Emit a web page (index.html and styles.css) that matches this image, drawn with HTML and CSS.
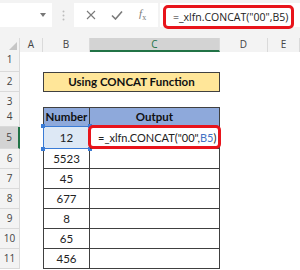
FILE: index.html
```html
<!DOCTYPE html>
<html>
<head>
<meta charset="utf-8">
<link rel="stylesheet" href="styles.css">
</head>
<body>
<div class="topbar">
    <div class="namebox">
        <svg class="arrow" width="6" height="4" viewBox="0 0 6 4"><path d="M0 0 L6 0 L3 4 Z" fill="#777777"/></svg>
    </div>
    <div class="dots">
        <svg width="3" height="11" viewBox="0 0 3 11"><circle cx="1.5" cy="1.5" r="1" fill="#bcbcbc"/><circle cx="1.5" cy="5.5" r="1" fill="#bcbcbc"/><circle cx="1.5" cy="9.5" r="1" fill="#bcbcbc"/></svg>
    </div>
    <div class="fxbox">
        <svg width="10" height="10" viewBox="0 0 10 10"><path d="M1 1 L9 9 M9 1 L1 9" stroke="#7a7a7a" stroke-width="1.1" fill="none"/></svg>
        <svg width="12" height="10" viewBox="0 0 12 10"><path d="M1 5.5 L4.5 9 L11 1.5" stroke="#7a7a7a" stroke-width="1.6" fill="none"/></svg>
        <span class="fx"><i>f</i><sub>x</sub></span>
    </div>
    <div class="formula">
        <div class="formula-hl">=_xlfn.CONCAT("00",B5)</div>
    </div>
</div>

<div class="sheet">
    <div class="row r-head">
        <div class="corner"><svg width="9" height="9" viewBox="0 0 9 9"><path d="M9 0 L9 9 L0 9 Z" fill="#c6c6c6"/></svg></div>
        <div class="ch">A</div>
        <div class="ch">B</div>
        <div class="ch ch-sel">C</div>
        <div class="ch">D</div>
        <div class="ch">E</div>
    </div>
    <div class="row r1">
        <div class="rh">1</div>
    </div>
    <div class="row r2">
        <div class="rh">2</div>
        <div class="title">Using CONCAT Function</div>
    </div>
    <div class="row r3">
        <div class="rh">3</div>
    </div>
    <div class="row r4">
        <div class="rh">4</div>
        <div class="cell b th top">Number</div>
        <div class="cell c th top">Output</div>
    </div>
    <div class="row r5">
        <div class="rh rh-sel">5</div>
        <div class="cell b anchor active">12<div class="selbox"><span class="h tl"></span><span class="h tr"></span><span class="h bl"></span><span class="h br"></span></div></div>
        <div class="cell c anchor out">=_xlfn.CONCAT("00",<span class="ref">B5</span>)<div class="redbox"></div></div>
    </div>
    <div class="row"><div class="rh">6</div><div class="cell b">5523</div><div class="cell c"></div></div>
    <div class="row"><div class="rh">7</div><div class="cell b">45</div><div class="cell c"></div></div>
    <div class="row"><div class="rh">8</div><div class="cell b">677</div><div class="cell c"></div></div>
    <div class="row"><div class="rh">9</div><div class="cell b">8</div><div class="cell c"></div></div>
    <div class="row"><div class="rh">10</div><div class="cell b">65</div><div class="cell c"></div></div>
    <div class="row"><div class="rh">11</div><div class="cell b">456</div><div class="cell c"></div></div>
</div>
</body>
</html>
```

FILE: styles.css
```css
body {
    margin: 0;
    background: #ffffff;
    font-family: Lato, "Liberation Sans", sans-serif;
    overflow: hidden;
}

/* formula bar */
.topbar {
    display: flex;
    height: 38px;
    padding-top: 3px;
    box-sizing: border-box;
    background: #f3f3f3;
}

.namebox {
    width: 52px;
    height: 24px;
    background: #ffffff;
    display: flex;
    align-items: center;
    justify-content: flex-end;
    padding-right: 6px;
    box-sizing: border-box;
}

.dots {
    width: 22px;
    height: 24px;
    display: flex;
    align-items: center;
    justify-content: center;
}

.fxbox {
    width: 84px;
    height: 24px;
    background: #ffffff;
    display: flex;
    align-items: center;
    justify-content: space-around;
    padding: 0 4px;
    box-sizing: border-box;
}

.fx {
    font-family: "Liberation Serif", serif;
    font-size: 11px;
    color: #7a7a7a;
}

.fx sub {
    font-size: 8px;
}

.formula {
    flex: 1;
    height: 24px;
    margin-left: 2px;
    background: #ffffff;
}

.formula-hl {
    margin: 2px 6px 0 3px;
    height: 24px;
    border: 3px solid #e8141b;
    border-radius: 5px;
    box-sizing: border-box;
    padding-left: 7px;
    font-family: "Open Sans", "Noto Sans", sans-serif;
    font-size: 10.5px;
    line-height: 18px;
    color: #222222;
}

/* sheet rows */
.row {
    display: grid;
    grid-template-columns: 20px 23px 47px 130px 48px 32px;
    height: 20px;
    line-height: 19px;
}

.r-head { height: 12px; }
.r1 { height: 22px; }
.r3 { height: 15px; }
.r5 { height: 22px; line-height: 21px; }

.corner, .ch {
    background: #f3f3f3;
    border-right: 1px solid #dadada;
    box-sizing: border-box;
}

.corner {
    display: flex;
    align-items: flex-end;
    justify-content: flex-end;
    padding: 0 2px 1px 0;
}

.ch {
    font-family: "Open Sans", sans-serif;
    font-size: 10px;
    line-height: 12px;
    color: #444444;
    text-align: center;
}

.ch-sel {
    background: #d3d3d3;
    border-bottom: 2px solid #217346;
    color: #217346;
}

.rh {
    grid-column: 1;
    background: #f3f3f3;
    border-bottom: 1px solid #dadada;
    border-right: 1px solid #dadada;
    box-sizing: border-box;
    font-family: "Open Sans", sans-serif;
    font-size: 10px;
    color: #444444;
    text-align: center;
}

.rh-sel {
    background: #d3d3d3;
    border-right: 2px solid #217346;
}

.title {
    grid-column: 3 / span 2;
    background: #ffe699;
    border: 1px solid #404040;
    box-sizing: border-box;
    font-weight: bold;
    font-size: 11.5px;
    line-height: 18px;
    text-align: center;
    color: #111111;
}

.cell {
    border-right: 1px solid #404040;
    border-bottom: 1px solid #404040;
    box-sizing: border-box;
    font-size: 11.5px;
    color: #222222;
    text-align: center;
}

.anchor { position: relative; }

.b {
    grid-column: 3;
    border-left: 1px solid #404040;
}

.c { grid-column: 4; }

.top {
    border-top: 1px solid #404040;
    line-height: 18px;
}

.th {
    background: #8ea9db;
    font-weight: bold;
    color: #111111;
}

.active {
    background: #dde8f5;
}

.selbox {
    position: absolute;
    left: -1px;
    top: -1px;
    right: -1px;
    bottom: -1px;
    border: 1px solid #3a7bd5;
}

.h {
    position: absolute;
    width: 4px;
    height: 4px;
    background: #3a7bd5;
}

.tl { left: -3px; top: -3px; }
.tr { right: -3px; top: -3px; }
.bl { left: -3px; bottom: -3px; }
.br { right: -3px; bottom: -3px; }

.out {
    text-align: left;
    padding-left: 8px;
    font-size: 11px;
}

.ref { color: #4472c4; }

.redbox {
    position: absolute;
    left: -2px;
    top: -2px;
    right: -2px;
    bottom: -1px;
    border: 3px solid #e8141b;
    border-radius: 5px;
}
```
